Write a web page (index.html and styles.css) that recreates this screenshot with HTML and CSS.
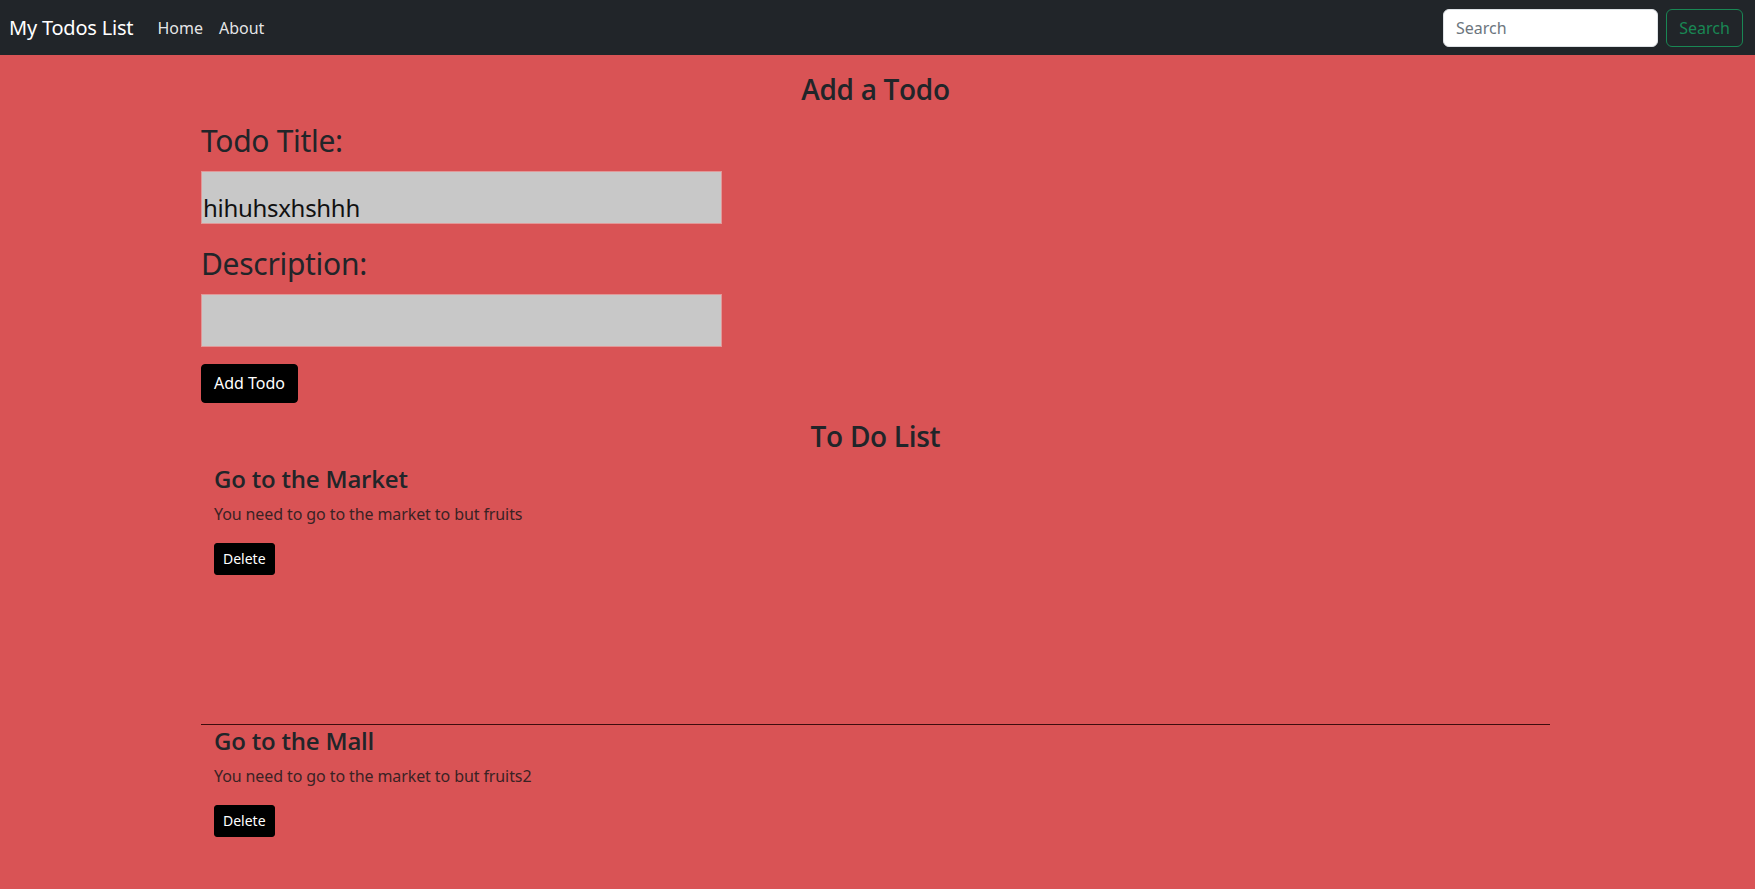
FILE: index.html
```html
<!DOCTYPE html>
<html lang="en">
<head>
<meta charset="utf-8">
<title>My Todos List</title>
<link rel="stylesheet" href="styles.css">
</head>
<body>
<nav class="navbar">
  <a class="brand" href="#">My Todos List</a>
  <ul class="nav">
    <li><a class="nav-link" href="#">Home</a></li>
    <li><a class="nav-link" href="#">About</a></li>
  </ul>
  <form class="search">
    <input class="search-input" type="search" placeholder="Search">
    <button class="search-btn" type="button">Search</button>
  </form>
</nav>
<main class="container">
  <h3 class="section-title">Add a Todo</h3>
  <form class="todo-form">
    <label class="field-label" for="title">Todo Title:</label>
    <input class="field" id="title" type="text" value="hihuhsxhshhh">
    <label class="field-label" for="desc">Description:</label>
    <input class="field" id="desc" type="text">
    <button class="btn-black" type="button">Add Todo</button>
  </form>
  <h3 class="section-title list-title">To Do List</h3>
  <div class="todo-list">
    <div class="todo">
      <h4 class="todo-title">Go to the Market</h4>
      <p class="todo-desc">You need to go to the market to but fruits</p>
      <button class="btn-black btn-sm" type="button">Delete</button>
    </div>
    <div class="todo">
      <h4 class="todo-title">Go to the Mall</h4>
      <p class="todo-desc">You need to go to the market to but fruits2</p>
      <button class="btn-black btn-sm" type="button">Delete</button>
    </div>
  </div>
</main>
</body>
</html>
```

FILE: styles.css
```css
* { box-sizing: border-box; }

html, body {
  margin: 0;
  padding: 0;
}

body {
  background: #d95355;
  color: #212529;
  font-family: "Noto Sans", "Open Sans", sans-serif;
  font-size: 16px;
  line-height: 1.5;
  min-height: 889px;
}

/* Navbar */
.navbar {
  height: 55px;
  background: #212529;
  display: flex;
  align-items: center;
  padding: 0 12px 0 9px;
}

.brand {
  color: #fff;
  font-size: 20px;
  line-height: 1.5;
  letter-spacing: -0.2px;
  text-decoration: none;
  margin-right: 16px;
}

.nav {
  list-style: none;
  display: flex;
  margin: 0;
  padding: 0;
  flex: 1;
}

.nav-link {
  display: block;
  padding: 8px;
  color: rgba(255, 255, 255, 0.9);
  text-decoration: none;
  font-size: 16px;
}

.search {
  display: flex;
  gap: 8px;
  margin: 0;
}

.search-input {
  width: 215px;
  height: 38px;
  border: 1px solid #dee2e6;
  border-radius: 6px;
  background: #fff;
  padding: 6px 12px;
  font: inherit;
  font-size: 16px;
  color: #212529;
}

.search-input::placeholder { color: #6c757d; }

.search-btn {
  height: 38px;
  width: 77px;
  border: 1px solid #198754;
  border-radius: 6px;
  background: transparent;
  color: #198754;
  font: inherit;
  font-size: 16px;
  padding: 0;
}

/* Main */
.container {
  width: 1349px;
  margin-left: 201px;
  padding-top: 18px;
}

.section-title {
  margin: 0;
  text-align: center;
  font-family: "Open Sans", "Noto Sans", sans-serif;
  font-size: 28px;
  font-weight: 600;
  line-height: 1.2;
  letter-spacing: -0.3px;
}

.todo-form {
  display: flex;
  flex-direction: column;
  align-items: flex-start;
  padding-top: 16px;
}

.field-label {
  font-size: 30px;
  line-height: 1.2;
  letter-spacing: -0.3px;
  margin-bottom: 12px;
}

.field {
  width: 521px;
  height: 53px;
  background: #c8c8c8;
  border: 1px solid #e29898;
  padding: 21px 1px 0;
  font: inherit;
  font-size: 24px;
  line-height: 1.2;
  letter-spacing: -0.3px;
  color: #111;
  margin-bottom: 22px;
  outline: none;
}

.field + .field-label + .field { margin-bottom: 17px; }

.btn-black {
  background: #000;
  color: #fff;
  border: 1px solid #000;
  border-radius: 4px;
  font: inherit;
  font-size: 16px;
  height: 39px;
  padding: 0 12px;
}

.list-title {
  margin-top: 17px;
}

.todo-list {
  padding-top: 12px;
}

.todo {
  padding: 0 13px;
}

.todo:not(:last-child) {
  padding-bottom: 149px;
  border-bottom: 1px solid #3d0d0e;
}

.todo + .todo {
  padding-top: 2px;
}

.todo-title {
  margin: 0;
  font-family: "Open Sans", "Noto Sans", sans-serif;
  font-size: 24px;
  font-weight: 600;
  line-height: 1.2;
  letter-spacing: -0.2px;
}

.todo-desc {
  margin: 8px 0 17px;
  font-size: 16px;
  line-height: 1.5;
  letter-spacing: -0.1px;
  color: #3a2224;
}

.btn-sm {
  font-size: 14px;
  height: 32px;
  padding: 0 8px;
  border-radius: 3px;
}
```
